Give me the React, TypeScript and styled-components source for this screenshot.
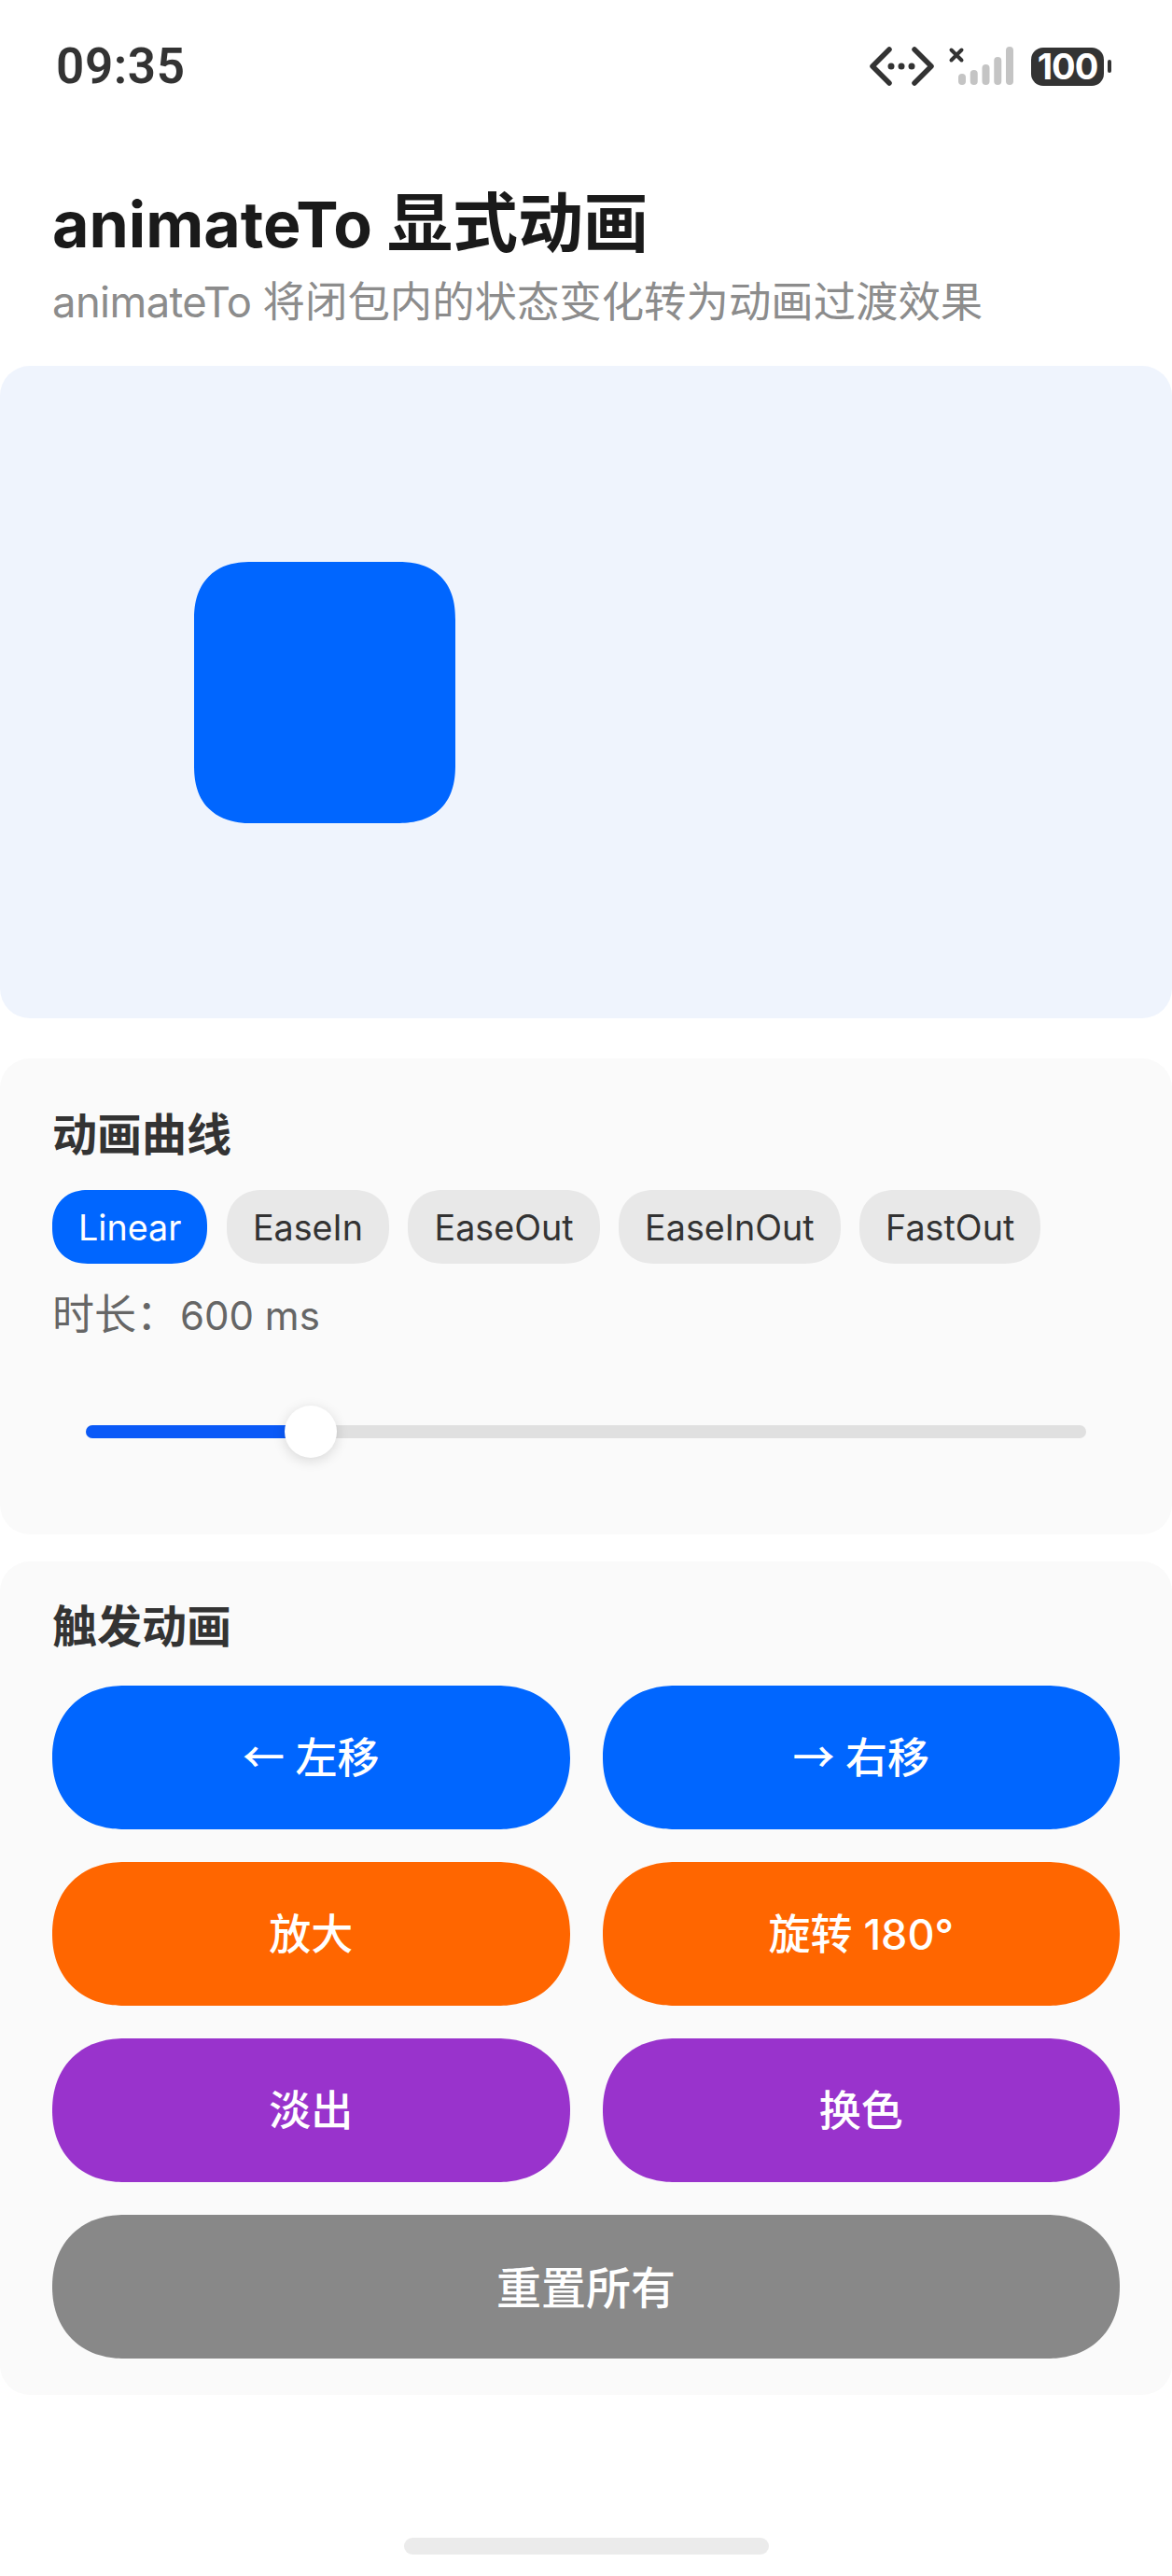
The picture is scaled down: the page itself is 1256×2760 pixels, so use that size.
import * as React from 'react'
import styled, { createGlobalStyle } from 'styled-components'

const FONT_STACK = `Inter, "Noto Sans CJK SC", sans-serif`

const GlobalStyle = createGlobalStyle`
  html, body {
    margin: 0;
    padding: 0;
    background: #ffffff;
  }
  * {
    box-sizing: border-box;
  }
`

const Page = styled.div`
  width: 1256px;
  height: 2760px;
  display: flex;
  flex-direction: column;
  font-family: ${FONT_STACK};
  overflow: hidden;
  background: #ffffff;
`

const StatusBar = styled.div`
  height: 142px;
  padding: 0 65px 0 60px;
  display: flex;
  align-items: center;
  justify-content: space-between;
`

const Clock = styled.span`
  font-family: Roboto, sans-serif;
  font-size: 53px;
  font-weight: 600;
  letter-spacing: 0.6px;
  color: #333333;
`

const StatusIcons = styled.div`
  display: flex;
  align-items: center;
`

const SignalWrap = styled.div`
  display: flex;
  margin-left: 14px;
`

const BatteryBody = styled.div`
  width: 78px;
  height: 41px;
  margin-left: 19px;
  border-radius: 13px;
  background: #333333;
  color: #ffffff;
  font-size: 38px;
  font-weight: 700;
  line-height: 41px;
  text-align: center;
  letter-spacing: -1px;
`

const BatteryNub = styled.div`
  width: 4px;
  height: 14px;
  margin-left: 4px;
  border-radius: 2px;
  background: #333333;
`

const Header = styled.header`
  padding: 58px 56px 40px;
`

const Title = styled.h1`
  margin: 0 0 16px;
  font-size: 68px;
  line-height: 80px;
  font-weight: 700;
  color: #1a1a1a;
`

const TitleCjk = styled.span`
  font-size: 70px;
`

const Subtitle = styled.p`
  margin: 0;
  font-size: 45.4px;
  line-height: 56px;
  color: #8c8c8c;
`

const SubtitleLatin = styled.span`
  letter-spacing: -0.6px;
`

const Stage = styled.div`
  height: 699px;
  padding-left: 208px;
  display: flex;
  align-items: center;
  border-radius: 32px;
  background: #eff4fd;
`

const AnimatedBox = styled.div`
  width: 280px;
  height: 280px;
  border-radius: 62px;
  corner-shape: superellipse(1.25);
  background: #0066ff;
`

const Panel = styled.section<{ $height: number; $top: number; $pad: number }>`
  height: ${({ $height }) => $height}px;
  margin-top: ${({ $top }) => $top}px;
  padding: ${({ $pad }) => $pad}px 56px 0;
  border-radius: 32px;
  background: #fafafa;
`

const PanelTitle = styled.h2`
  margin: 0;
  font-size: 48px;
  line-height: 64px;
  font-weight: 700;
  color: #333333;
`

const ChipRow = styled.div`
  margin-top: 27px;
  display: flex;
  gap: 20.5px;
`

const Chip = styled.div<{ $active?: boolean }>`
  height: 79px;
  padding: 0 28px;
  display: flex;
  align-items: center;
  border-radius: 38px;
  corner-shape: superellipse(1.15);
  font-size: 37.7px;
  color: ${({ $active }) => ($active ? '#ffffff' : '#333333')};
  background: ${({ $active }) => ($active ? '#0066ff' : '#e8e8e8')};
`

const DurationLabel = styled.div`
  margin-top: 25px;
  font-size: 45px;
  line-height: 60px;
  color: #666666;
`

const DurationValue = styled.span`
  margin-left: 2px;
  font-size: 42px;
`

const SliderTrack = styled.div`
  position: relative;
  margin: 87px 36px 0;
  height: 14px;
  border-radius: 7px;
  background: #e0e0e0;
`

const SliderFill = styled.div`
  height: 100%;
  border-radius: 7px 0 0 7px;
  background: #0a59f7;
`

const SliderThumb = styled.div`
  position: absolute;
  top: -21px;
  width: 56px;
  height: 56px;
  margin-left: -28px;
  border-radius: 50%;
  background: #ffffff;
  box-shadow: 0 3px 14px rgba(0, 0, 0, 0.14);
`

const ButtonGrid = styled.div`
  margin-top: 31px;
  display: grid;
  grid-template-columns: 1fr 1fr;
  gap: 35px 35px;
`

const ActionButton = styled.div<{ $color: string; $wide?: boolean; $size?: number }>`
  grid-column: ${({ $wide }) => ($wide ? '1 / -1' : 'auto')};
  height: 154px;
  padding-bottom: 5px;
  display: flex;
  align-items: center;
  justify-content: center;
  gap: 0.25em;
  border-radius: 78px;
  corner-shape: superellipse(1.12);
  background: ${({ $color }) => $color};
  color: #ffffff;
  font-size: ${({ $size }) => $size ?? 45}px;
  font-weight: 500;
`

const Arrow = styled.span`
  font-family: "Noto Sans CJK SC", sans-serif;
`

const HomeIndicator = styled.div`
  align-self: center;
  width: 391px;
  height: 18px;
  margin-top: 153px;
  border-radius: 9px;
  background: #ebebeb;
`

function NetworkIcon() {
  return (
    <svg width="70" height="44" viewBox="0 0 70 44" fill="none">
      <path
        d="M21 4 L3 22 L21 40 M48 4 L66 22 L48 40"
        stroke="#333333"
        strokeWidth="5.5"
        strokeLinecap="round"
        strokeLinejoin="round"
      />
      <circle cx="23" cy="22" r="3.5" fill="#333333" />
      <circle cx="34" cy="22" r="3.5" fill="#333333" />
      <circle cx="45" cy="22" r="3.5" fill="#333333" />
    </svg>
  )
}

function SignalIcon() {
  const bars = [79, 75, 69, 61, 50]
  return (
    <svg width="70" height="44" viewBox="0 0 70 44" fill="none">
      <path
        d="M3.5 4.5 L14.5 15.5 M14.5 4.5 L3.5 15.5"
        stroke="#333333"
        strokeWidth="4"
        strokeLinecap="round"
      />
      {bars.map((top, i) => (
        <rect
          key={top}
          x={11 + i * 12.75}
          y={top - 49}
          width="8"
          height={91 - top}
          rx="4"
          fill="#c4c4c4"
        />
      ))}
    </svg>
  )
}

const CURVES = ['Linear', 'EaseIn', 'EaseOut', 'EaseInOut', 'FastOut']

export default function App() {
  return (
    <Page>
      <GlobalStyle />
      <StatusBar>
        <Clock>09:35</Clock>
        <StatusIcons>
          <NetworkIcon />
          <SignalWrap>
            <SignalIcon />
          </SignalWrap>
          <BatteryBody>100</BatteryBody>
          <BatteryNub />
        </StatusIcons>
      </StatusBar>

      <Header>
        <Title>
          animateTo <TitleCjk>显式动画</TitleCjk>
        </Title>
        <Subtitle>
          <SubtitleLatin>animateTo </SubtitleLatin>将闭包内的状态变化转为动画过渡效果
        </Subtitle>
      </Header>

      <Stage>
        <AnimatedBox />
      </Stage>

      <Panel $height={510} $top={43} $pad={50}>
        <PanelTitle>动画曲线</PanelTitle>
        <ChipRow>
          {CURVES.map((curve, i) => (
            <Chip key={curve} $active={i === 0}>
              {curve}
            </Chip>
          ))}
        </ChipRow>
        <DurationLabel>
          时长：<DurationValue>600 ms</DurationValue>
        </DurationLabel>
        <SliderTrack>
          <SliderFill style={{ width: '22.5%' }} />
          <SliderThumb style={{ left: '22.5%' }} />
        </SliderTrack>
      </Panel>

      <Panel $height={893} $top={29} $pad={38}>
        <PanelTitle>触发动画</PanelTitle>
        <ButtonGrid>
          <ActionButton $color="#0066ff">
            <Arrow>←</Arrow>
            <span>左移</span>
          </ActionButton>
          <ActionButton $color="#0066ff">
            <Arrow>→</Arrow>
            <span>右移</span>
          </ActionButton>
          <ActionButton $color="#ff6600">放大</ActionButton>
          <ActionButton $color="#ff6600">旋转 180°</ActionButton>
          <ActionButton $color="#9933cc">淡出</ActionButton>
          <ActionButton $color="#9933cc">换色</ActionButton>
          <ActionButton $color="#888888" $wide $size={48}>
            重置所有
          </ActionButton>
        </ButtonGrid>
      </Panel>

      <HomeIndicator />
    </Page>
  )
}
